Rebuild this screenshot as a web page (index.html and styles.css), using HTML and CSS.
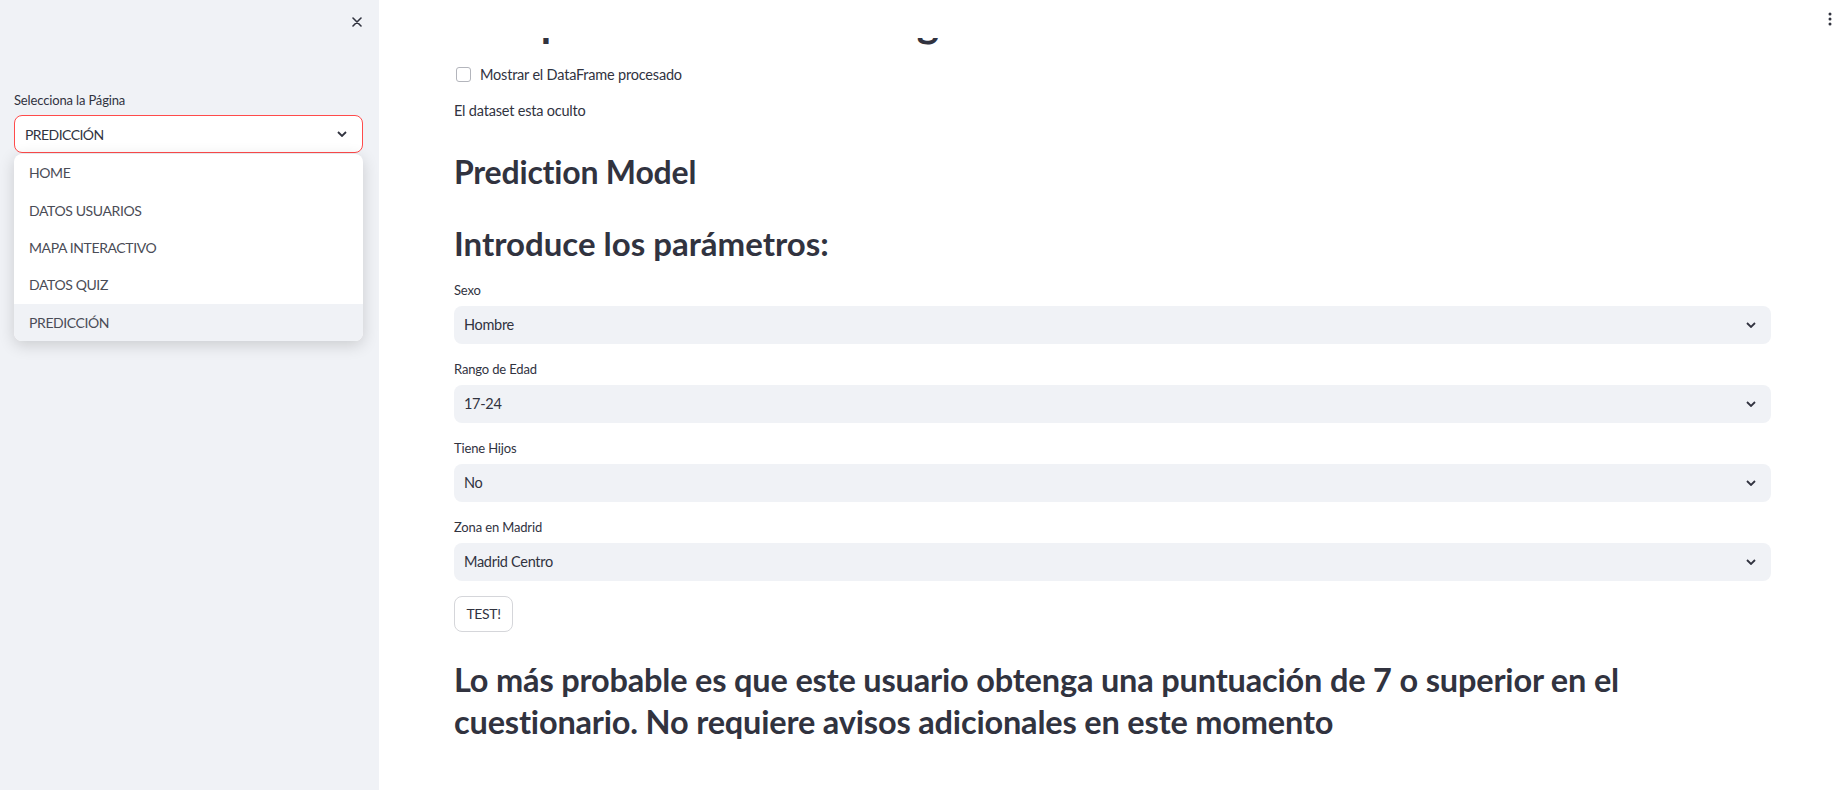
FILE: index.html
```html
<!DOCTYPE html>
<html lang="es">
<head>
<meta charset="utf-8">
<title>Prediction Model</title>
<link rel="stylesheet" href="styles.css">
</head>
<body>
<aside class="sidebar">
  <div class="sidebar-top">
    <button class="close-btn" aria-label="Cerrar">
      <svg width="10" height="10" viewBox="0 0 10 10"><path d="M1 1L9 9M9 1L1 9" stroke="#31333F" stroke-width="1.6" stroke-linecap="round"/></svg>
    </button>
  </div>
  <div class="field">
    <div class="side-label">Selecciona la Página</div>
    <div class="select-wrap">
      <div class="side-select">
        <span>PREDICCIÓN</span>
        <svg class="chev" width="10" height="6" viewBox="0 0 10 6"><path d="M1 1L5 5L9 1" fill="none" stroke="#31333F" stroke-width="1.8"/></svg>
      </div>
      <ul class="menu">
        <li>HOME</li>
        <li>DATOS USUARIOS</li>
        <li>MAPA INTERACTIVO</li>
        <li>DATOS QUIZ</li>
        <li class="active">PREDICCIÓN</li>
      </ul>
    </div>
  </div>
</aside>
<main class="main">
  <header class="topbar">
    <svg class="dots" width="4" height="14" viewBox="0 0 4 14"><circle cx="2" cy="2" r="1.5" fill="#31333F"/><circle cx="2" cy="7" r="1.5" fill="#31333F"/><circle cx="2" cy="12" r="1.5" fill="#31333F"/></svg>
  </header>
  <h1 class="title">Comportamiento del riesgo</h1>
  <label class="check-row"><span class="checkbox"></span><span>Mostrar el DataFrame procesado</span></label>
  <p class="text">El dataset esta oculto</p>
  <h2 class="h-model">Prediction Model</h2>
  <h2 class="h-params">Introduce los parámetros:</h2>
  <div class="form">
    <div class="group">
      <div class="label">Sexo</div>
      <div class="select"><span>Hombre</span><svg class="chev" width="10" height="6" viewBox="0 0 10 6"><path d="M1 1L5 5L9 1" fill="none" stroke="#31333F" stroke-width="1.8"/></svg></div>
    </div>
    <div class="group">
      <div class="label">Rango de Edad</div>
      <div class="select"><span>17-24</span><svg class="chev" width="10" height="6" viewBox="0 0 10 6"><path d="M1 1L5 5L9 1" fill="none" stroke="#31333F" stroke-width="1.8"/></svg></div>
    </div>
    <div class="group">
      <div class="label">Tiene Hijos</div>
      <div class="select"><span>No</span><svg class="chev" width="10" height="6" viewBox="0 0 10 6"><path d="M1 1L5 5L9 1" fill="none" stroke="#31333F" stroke-width="1.8"/></svg></div>
    </div>
    <div class="group">
      <div class="label">Zona en Madrid</div>
      <div class="select"><span>Madrid Centro</span><svg class="chev" width="10" height="6" viewBox="0 0 10 6"><path d="M1 1L5 5L9 1" fill="none" stroke="#31333F" stroke-width="1.8"/></svg></div>
    </div>
  </div>
  <button class="btn">TEST!</button>
  <h2 class="result">Lo más probable es que este usuario obtenga una puntuación de 7 o superior en el cuestionario. No requiere avisos adicionales en este momento</h2>
</main>
</body>
</html>
```

FILE: styles.css
```css
* { box-sizing: border-box; }
html, body { height: 100%; }
body {
  margin: 0;
  display: flex;
  height: 790px;
  overflow: hidden;
  font-family: Lato, "Noto Sans", sans-serif;
  color: #31333F;
  background: #ffffff;
}
.sidebar {
  width: 379px;
  flex: none;
  background: #f0f2f6;
  padding: 0 16px 0 14px;
}
.sidebar-top {
  display: flex;
  justify-content: flex-end;
  padding-top: 17px;
  padding-right: 1px;
  height: 27px;
}
.close-btn {
  border: 0;
  background: none;
  padding: 0;
  width: 10px;
  height: 10px;
  display: block;
}
.close-btn svg { display: block; }
.field { margin-top: 63px; }
.side-label {
  font-size: 13px;
  letter-spacing: -0.15px;
  line-height: 20px;
  height: 20px;
  margin-bottom: 5px;
}
.select-wrap { position: relative; }
.side-select {
  height: 38px;
  border: 1px solid #ff4b4b;
  border-radius: 8px;
  background: #fff;
  display: flex;
  align-items: center;
  justify-content: space-between;
  padding: 0 15px 0 10px;
  font-size: 14px;
  letter-spacing: -0.55px;
}
.menu {
  position: absolute;
  top: 39px;
  left: 0;
  right: 0;
  margin: 0;
  padding: 0;
  list-style: none;
  background: #fff;
  border-radius: 8px;
  box-shadow: 0 4px 16px rgba(0, 0, 0, 0.16);
  overflow: hidden;
}
.menu li {
  height: 37.4px;
  display: flex;
  align-items: center;
  padding-left: 15px;
  font-size: 14px;
  letter-spacing: -0.4px;
  color: #4a4c56;
}
.menu li.active { background: #f0f2f6; }

.main {
  flex: 1;
  position: relative;
  padding: 0 70px 0 75px;
  overflow: hidden;
}
.topbar {
  position: absolute;
  top: 0;
  left: 0;
  right: 0;
  height: 38px;
  background: #fff;
  z-index: 2;
}
.dots { position: absolute; top: 12px; left: 1449px; }
.title {
  margin: -4px 0 0;
  font-size: 42px;
  line-height: 1.2;
  font-weight: 700;
}
.check-row {
  display: flex;
  align-items: center;
  gap: 9px;
  margin-top: 16px;
  height: 24px;
  font-size: 14.5px;
  letter-spacing: -0.2px;
  padding-left: 2px;
}
.checkbox {
  width: 15px;
  height: 15px;
  border: 1px solid #b3b5bc;
  border-radius: 3px;
  background: #fff;
}
.text {
  margin: 13px 0 0;
  font-size: 14.5px;
  letter-spacing: -0.2px;
  line-height: 24px;
}
.h-model, .h-params, .result {
  font-size: 33px;
  line-height: 1.2;
  font-weight: 700;
  margin: 0;
}
.h-model { margin-top: 29px; font-size: 32px; letter-spacing: -0.2px; line-height: 40px; }
.h-params { margin-top: 32px; }
.form {
  margin-top: 16px;
  display: flex;
  flex-direction: column;
  gap: 15px;
}
.label {
  font-size: 13px;
  letter-spacing: -0.15px;
  line-height: 20px;
  margin-bottom: 6px;
}
.select {
  height: 38px;
  background: #f0f2f6;
  border-radius: 8px;
  display: flex;
  align-items: center;
  justify-content: space-between;
  padding: 0 15px 0 10px;
  font-size: 14.5px;
  letter-spacing: -0.3px;
}
.chev { display: block; }
.btn {
  display: block;
  margin-top: 15px;
  height: 36px;
  width: 59px;
  padding: 0;
  border: 1px solid #d5d6da;
  border-radius: 8px;
  background: #fff;
  font-family: inherit;
  font-size: 14px;
  letter-spacing: -0.35px;
  color: #31333F;
}
.result {
  margin-top: 27px;
  font-size: 32.5px;
  letter-spacing: -0.18px;
  line-height: 42px;
}
```
